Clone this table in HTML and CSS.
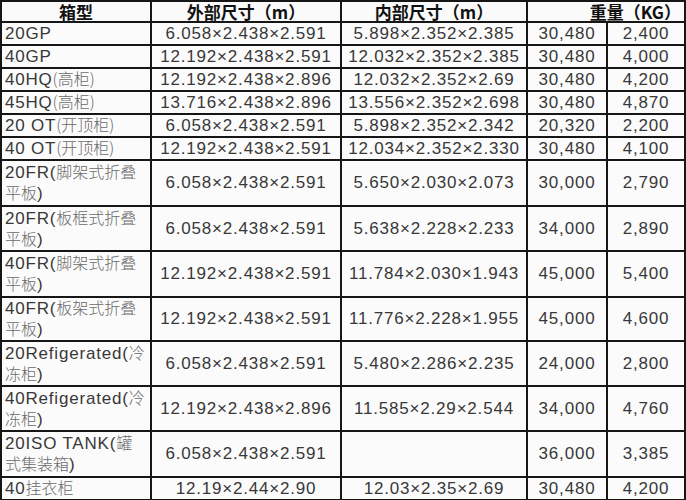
FILE: index.html
```html
<!DOCTYPE html>
<html lang="zh">
<head>
<meta charset="utf-8">
<title>集装箱规格</title>
<link rel="stylesheet" href="styles.css">
</head>
<body>
<table class="spec">
  <colgroup>
    <col class="c0"><col class="c1"><col class="c2"><col class="c3"><col class="c4">
  </colgroup>
  <thead>
    <tr class="head">
      <th class="hc">箱型</th>
      <th class="hc">外部尺寸（m）</th>
      <th class="hc">内部尺寸（m）</th>
      <th class="hr" colspan="2">重量（KG）</th>
    </tr>
  </thead>
  <tbody>
    <tr class="h22"><td class="name">20GP</td><td>6.058×2.438×2.591</td><td>5.898×2.352×2.385</td><td>30,480</td><td>2,400</td></tr>
    <tr class="h22"><td class="name">40GP</td><td>12.192×2.438×2.591</td><td>12.032×2.352×2.385</td><td>30,480</td><td>4,000</td></tr>
    <tr class="h23"><td class="name">40HQ<span class="cjk">(高柜)</span></td><td>12.192×2.438×2.896</td><td>12.032×2.352×2.69</td><td>30,480</td><td>4,200</td></tr>
    <tr class="h22"><td class="name">45HQ<span class="cjk">(高柜)</span></td><td>13.716×2.438×2.896</td><td>13.556×2.352×2.698</td><td>30,480</td><td>4,870</td></tr>
    <tr class="h23"><td class="name">20 OT<span class="cjk">(开顶柜)</span></td><td>6.058×2.438×2.591</td><td>5.898×2.352×2.342</td><td>20,320</td><td>2,200</td></tr>
    <tr class="h23"><td class="name">40 OT<span class="cjk">(开顶柜)</span></td><td>12.192×2.438×2.591</td><td>12.034×2.352×2.330</td><td>30,480</td><td>4,100</td></tr>
    <tr class="h46"><td class="name">20FR(<span class="cjk">脚架式折叠<br>平板</span>)</td><td>6.058×2.438×2.591</td><td>5.650×2.030×2.073</td><td>30,000</td><td>2,790</td></tr>
    <tr class="h45"><td class="name">20FR(<span class="cjk">板框式折叠<br>平板</span>)</td><td>6.058×2.438×2.591</td><td>5.638×2.228×2.233</td><td>34,000</td><td>2,890</td></tr>
    <tr class="h46"><td class="name">40FR(<span class="cjk">脚架式折叠<br>平板</span>)</td><td>12.192×2.438×2.591</td><td>11.784×2.030×1.943</td><td>45,000</td><td>5,400</td></tr>
    <tr class="h44"><td class="name">40FR(<span class="cjk">板架式折叠<br>平板</span>)</td><td>12.192×2.438×2.591</td><td>11.776×2.228×1.955</td><td>45,000</td><td>4,600</td></tr>
    <tr class="h45"><td class="name">20Refigerated(<span class="cjk">冷<br>冻柜</span>)</td><td>6.058×2.438×2.591</td><td>5.480×2.286×2.235</td><td>24,000</td><td>2,800</td></tr>
    <tr class="h45"><td class="name">40Refigerated(<span class="cjk">冷<br>冻柜</span>)</td><td>12.192×2.438×2.896</td><td>11.585×2.29×2.544</td><td>34,000</td><td>4,760</td></tr>
    <tr class="h46"><td class="name">20ISO TANK(<span class="cjk">罐<br>式集装箱</span>)</td><td>6.058×2.438×2.591</td><td></td><td>36,000</td><td>3,385</td></tr>
    <tr class="h23"><td class="name">40<span class="cjk">挂衣柜</span></td><td>12.19×2.44×2.90</td><td>12.03×2.35×2.69</td><td>30,480</td><td>4,200</td></tr>
  </tbody>
</table>
</body>
</html>
```
FILE: styles.css
```css
html, body {
  margin: 0;
  padding: 0;
  background: #ffffff;
}

.spec {
  border-collapse: collapse;
  table-layout: fixed;
  width: 684px;
  font-family: "Liberation Sans", Arial, "Noto Sans CJK SC", sans-serif;
  font-size: 17px;
  letter-spacing: 0.8px;
  color: #383838;
  background: #fbfbfb;
}

.c0 { width: 150px; }
.c1 { width: 190px; }
.c2 { width: 186px; }
.c3 { width: 80px; }
.c4 { width: 78px; }

.spec th,
.spec td {
  border: 2px solid #161616;
  padding: 0 2px;
  text-align: center;
  vertical-align: middle;
  line-height: 18px;
  white-space: nowrap;
}

.head { height: 20px; }
.h22 { height: 22px; }
.h23 { height: 23px; }
.h44 { height: 44px; }
.h45 { height: 45px; }
.h46 { height: 46px; }

.spec th {
  font-family: "Noto Sans CJK SC", sans-serif;
  font-weight: 700;
  font-size: 17px;
  letter-spacing: 0;
  color: #111111;
  background: #fafafa;
  line-height: 19px;
}

.spec th.hr {
  text-align: right;
  padding-right: 3px;
}

.spec td.name {
  text-align: left;
  padding-left: 3px;
  line-height: 21px;
}

.cjk {
  font-family: "Noto Sans CJK SC", sans-serif;
  font-weight: 300;
  color: #6a6a6a;
  letter-spacing: 0;
  font-size: 16px;
  line-height: 1;
}
```
